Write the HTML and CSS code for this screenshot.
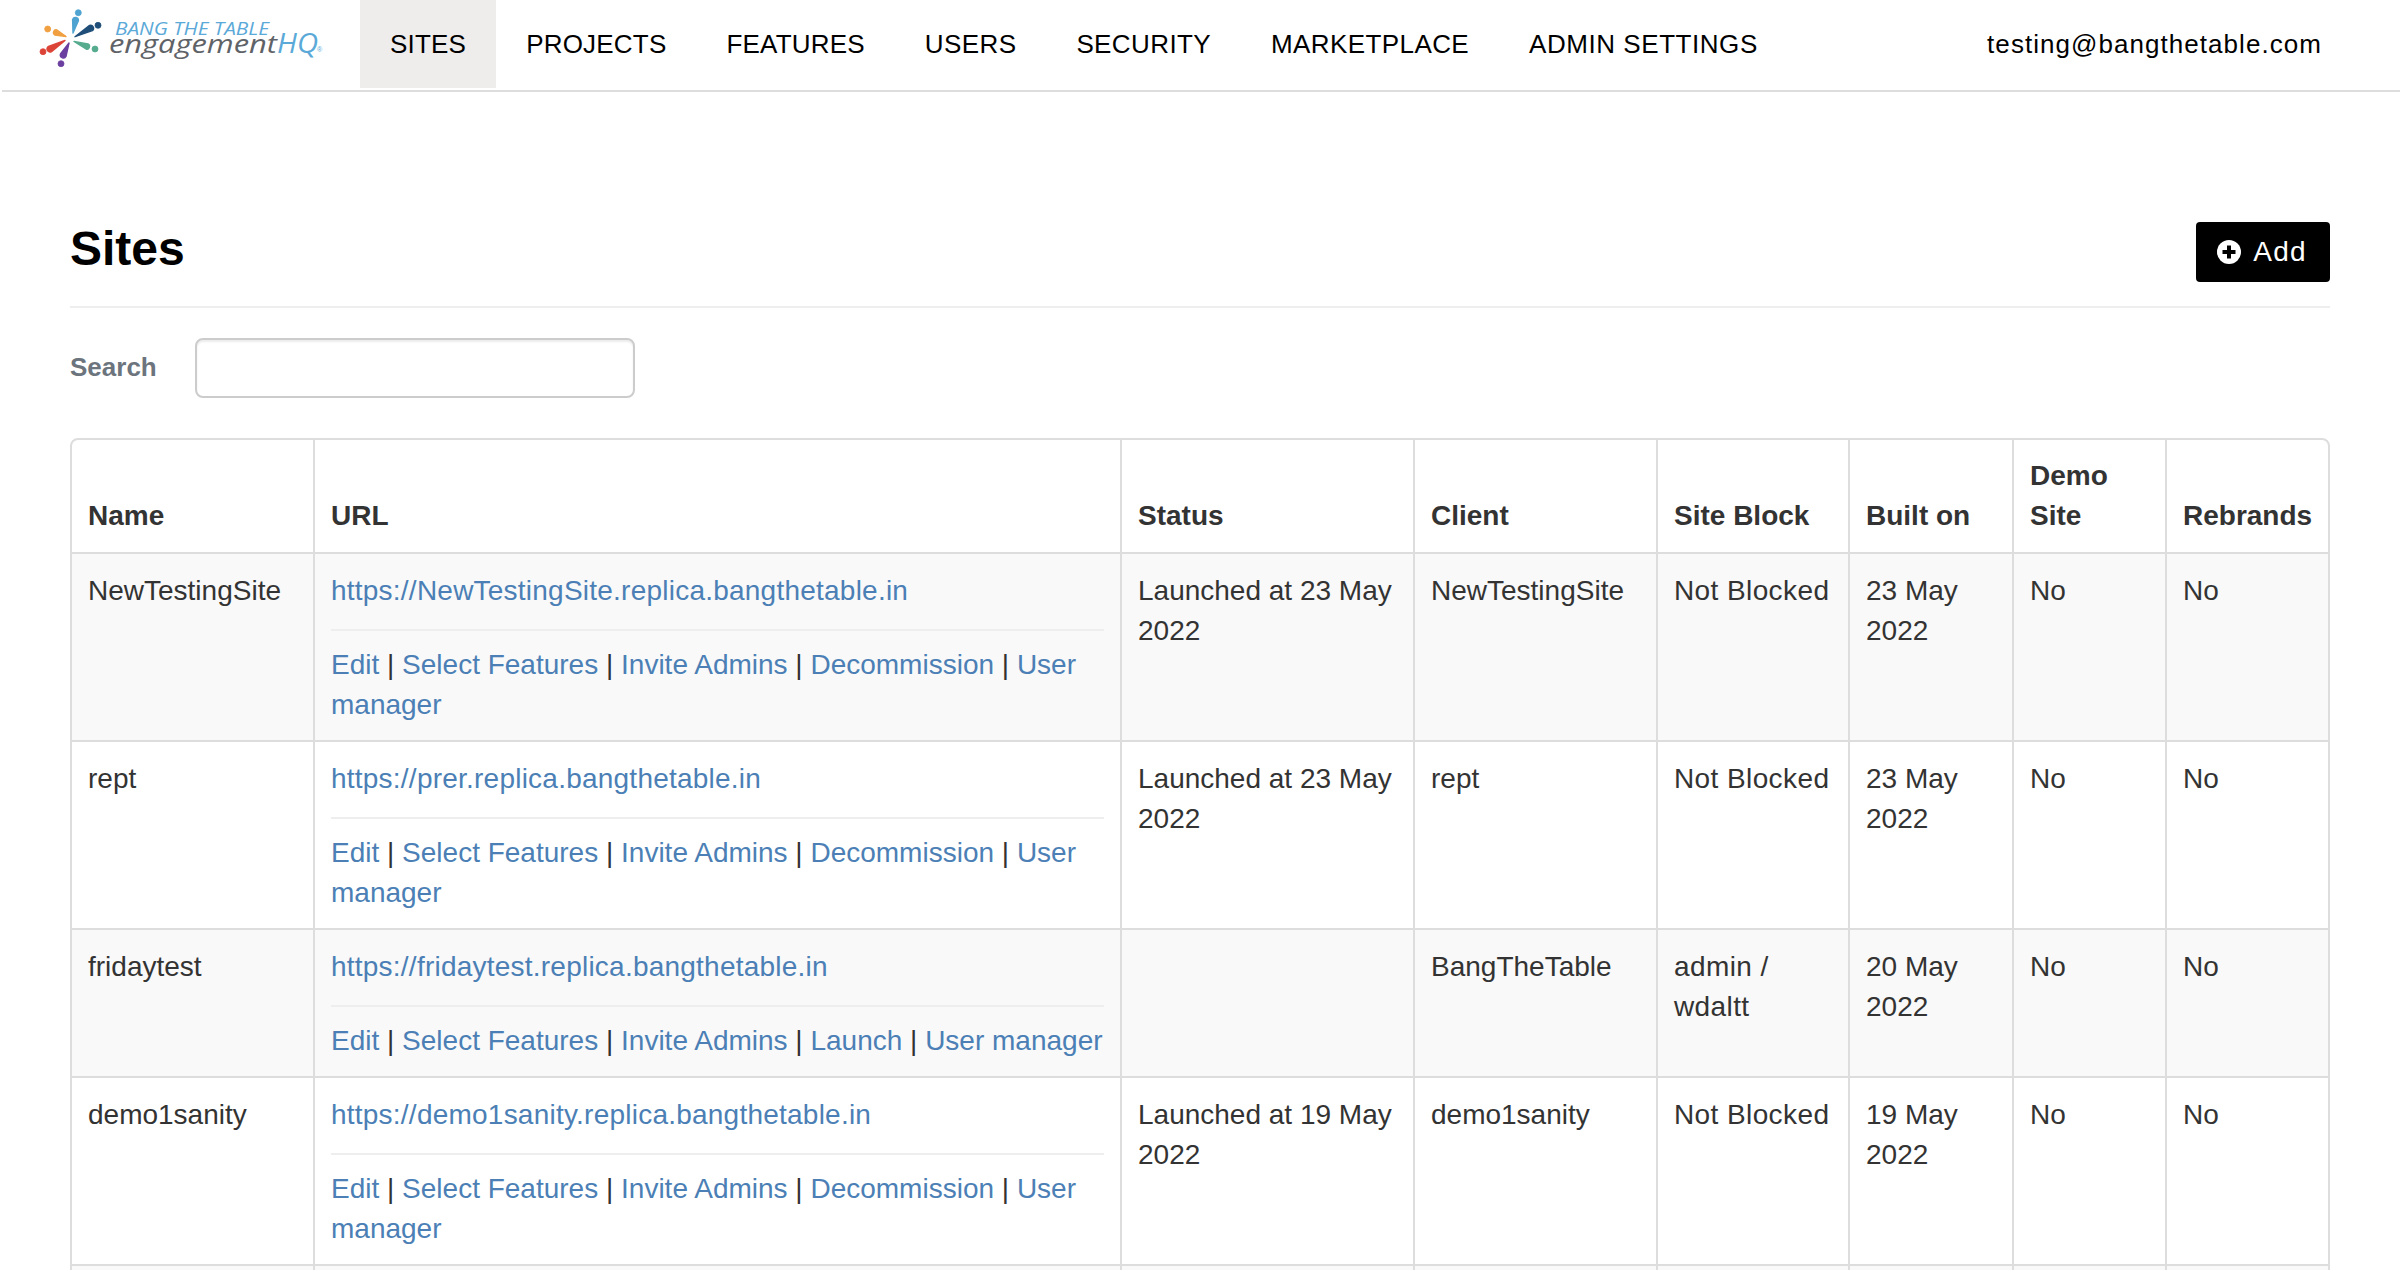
FILE: index.html
```html
<!DOCTYPE html>
<html lang="en">
<head>
<meta charset="utf-8">
<title>Sites</title>
<link rel="stylesheet" href="styles.css">
</head>
<body>
<header class="topbar">
  <a class="logo" href="#" aria-label="Bang the Table engagementHQ">
    <svg class="logo-art" viewBox="0 0 330 88" width="330" height="88">
      <g class="petal petal-blue">
        <circle cx="78.3" cy="12.7" r="3"/>
        <path d="M72.6 19.4A3 3 0 0 1 78.4 20.6L73 33Z"/>
      </g>
      <g class="petal petal-navy">
        <circle cx="98" cy="25.3" r="3"/>
        <path d="M89.6 25.4A3 3 0 0 1 92.4 30.6L75 36.7Z"/>
      </g>
      <g class="petal petal-green">
        <circle cx="95" cy="49" r="3"/>
        <path d="M88 44A2.7 2.7 0 0 1 86 49L74 41.5Z"/>
      </g>
      <g class="petal petal-purple">
        <circle cx="61" cy="63.7" r="3"/>
        <path d="M66 56.3A3 3 0 0 1 60.6 53.7L69 43Z"/>
      </g>
      <g class="petal petal-red">
        <circle cx="43" cy="51.7" r="3"/>
        <path d="M51.5 51.6A3 3 0 0 1 48.5 46.4L65 40.5Z"/>
      </g>
      <g class="petal petal-orange">
        <circle cx="47.7" cy="29" r="3"/>
        <path d="M55 35A2.7 2.7 0 0 1 57 30L66 36.5Z"/>
      </g>
      <text class="logo-top" x="115" y="35" textLength="154" lengthAdjust="spacingAndGlyphs">BANG THE TABLE</text>
      <text class="logo-main" x="109" y="52.5" textLength="168" lengthAdjust="spacingAndGlyphs">engagement</text>
      <text class="logo-hq" x="277" y="52.5" textLength="41" lengthAdjust="spacingAndGlyphs">HQ</text>
      <text class="logo-reg" x="317" y="52">®</text>
    </svg>
  </a>
  <nav class="main-nav">
    <a class="nav-item active" href="#">SITES</a>
    <a class="nav-item" href="#">PROJECTS</a>
    <a class="nav-item" href="#">FEATURES</a>
    <a class="nav-item" href="#">USERS</a>
    <a class="nav-item" href="#">SECURITY</a>
    <a class="nav-item" href="#">MARKETPLACE</a>
    <a class="nav-item" href="#">ADMIN SETTINGS</a>
  </nav>
  <a class="user-email" href="#">testing@bangthetable.com</a>
</header>

<main class="content">
  <div class="title-row">
    <h1 class="page-title">Sites</h1>
    <a class="add-btn" href="#">
      <svg class="add-icon" viewBox="0 0 24 24" width="24" height="24" aria-hidden="true">
        <circle cx="12" cy="12" r="12" fill="#fff"/>
        <path d="M12 5.5v13M5.5 12h13" stroke="#000" stroke-width="4" fill="none"/>
      </svg>
      <span>Add</span>
    </a>
  </div>

  <form class="search-row">
    <label class="search-label" for="search">Search</label>
    <input class="search-input" id="search" type="text">
  </form>

  <table class="sites-table">
    <colgroup>
      <col class="col-name"><col class="col-url"><col class="col-status"><col class="col-client">
      <col class="col-block"><col class="col-built"><col class="col-demo"><col class="col-rebrands">
    </colgroup>
    <thead>
      <tr>
        <th>Name</th><th>URL</th><th>Status</th><th>Client</th>
        <th>Site Block</th><th>Built on</th><th>Demo Site</th><th>Rebrands</th>
      </tr>
    </thead>
    <tbody>
      <tr>
        <td>NewTestingSite</td>
        <td>
          <a class="site-url" href="#">https://NewTestingSite.replica.bangthetable.in</a>
          <hr class="cell-rule">
          <a href="#">Edit</a> | <a href="#">Select Features</a> | <a href="#">Invite Admins</a> | <a href="#">Decommission</a> | <a href="#">User manager</a>
        </td>
        <td>Launched at 23 May 2022</td>
        <td>NewTestingSite</td>
        <td class="cell-block">Not Blocked</td>
        <td>23 May 2022</td>
        <td>No</td>
        <td>No</td>
      </tr>
      <tr>
        <td>rept</td>
        <td>
          <a class="site-url" href="#">https://prer.replica.bangthetable.in</a>
          <hr class="cell-rule">
          <a href="#">Edit</a> | <a href="#">Select Features</a> | <a href="#">Invite Admins</a> | <a href="#">Decommission</a> | <a href="#">User manager</a>
        </td>
        <td>Launched at 23 May 2022</td>
        <td>rept</td>
        <td class="cell-block">Not Blocked</td>
        <td>23 May 2022</td>
        <td>No</td>
        <td>No</td>
      </tr>
      <tr>
        <td>fridaytest</td>
        <td>
          <a class="site-url" href="#">https://fridaytest.replica.bangthetable.in</a>
          <hr class="cell-rule">
          <a href="#">Edit</a> | <a href="#">Select Features</a> | <a href="#">Invite Admins</a> | <a href="#">Launch</a> | <a href="#">User manager</a>
        </td>
        <td></td>
        <td>BangTheTable</td>
        <td class="cell-block">admin / wdaltt</td>
        <td>20 May 2022</td>
        <td>No</td>
        <td>No</td>
      </tr>
      <tr>
        <td>demo1sanity</td>
        <td>
          <a class="site-url" href="#">https://demo1sanity.replica.bangthetable.in</a>
          <hr class="cell-rule">
          <a href="#">Edit</a> | <a href="#">Select Features</a> | <a href="#">Invite Admins</a> | <a href="#">Decommission</a> | <a href="#">User manager</a>
        </td>
        <td>Launched at 19 May 2022</td>
        <td>demo1sanity</td>
        <td class="cell-block">Not Blocked</td>
        <td>19 May 2022</td>
        <td>No</td>
        <td>No</td>
      </tr>
      <tr class="row-next">
        <td></td><td></td><td></td><td></td><td></td><td></td><td></td><td></td>
      </tr>
    </tbody>
  </table>
</main>
</body>
</html>
```

FILE: styles.css
```css
* {
  box-sizing: border-box;
}

html {
  overflow: hidden;
}

body {
  margin: 0;
  background: #fff;
  color: #333;
  font-family: "Liberation Sans", Arial, sans-serif;
  font-size: 28px;
  line-height: 40px;
}

a {
  color: #4b7fb5;
  text-decoration: none;
}

/* Top bar */
.topbar {
  display: flex;
  align-items: flex-start;
  height: 92px;
  margin-left: 2px;
  border-bottom: 2px solid #ddd;
}

.logo {
  display: block;
  flex: none;
  width: 358px;
  height: 88px;
}

.logo-art {
  display: block;
  margin-left: -2px;
}

.petal {
  stroke-width: 1.4;
  stroke-linejoin: round;
}

.petal circle {
  stroke-width: 0.8;
}

.petal-blue { fill: #4fa3d1; stroke: #4fa3d1; }
.petal-navy { fill: #1f4e79; stroke: #1f4e79; }
.petal-green { fill: #55ab8e; stroke: #55ab8e; }
.petal-purple { fill: #6b3fa0; stroke: #6b3fa0; }
.petal-red { fill: #dc4437; stroke: #dc4437; }
.petal-orange { fill: #f0a040; stroke: #f0a040; }

.logo-top {
  fill: #5aa9d8;
  font-family: "Open Sans", "Liberation Sans", sans-serif;
  font-size: 18.6px;
  font-style: italic;
}

.logo-main {
  fill: #5f6368;
  font-family: "Open Sans", "Liberation Sans", sans-serif;
  font-size: 26px;
  font-style: italic;
}

.logo-hq {
  fill: #5aa9d8;
  font-family: "Open Sans", "Liberation Sans", sans-serif;
  font-size: 27px;
  font-style: italic;
}

.logo-reg {
  fill: #5aa9d8;
  font-family: "Liberation Sans", Arial, sans-serif;
  font-size: 7px;
}

.main-nav {
  display: flex;
}

.nav-item {
  display: block;
  height: 88px;
  padding: 0 30px;
  color: #000;
  font-size: 26px;
  line-height: 88px;
  letter-spacing: 0.4px;
}

.nav-item:nth-child(-n+3) {
  letter-spacing: 0.2px;
}

.nav-item:last-child {
  letter-spacing: 0.55px;
}

.nav-item.active {
  background: #efecec;
}

.user-email {
  margin-left: auto;
  margin-right: 78px;
  color: #000;
  font-size: 26px;
  line-height: 88px;
  letter-spacing: 1.05px;
}

/* Main content */
.content {
  padding: 130px 70px 0;
}

.title-row {
  display: flex;
  align-items: center;
  justify-content: space-between;
  padding-bottom: 24px;
  border-bottom: 2px solid #eee;
}

.page-title {
  margin: 0 0 6px;
  color: #000;
  font-size: 48px;
  font-weight: 700;
  line-height: 54px;
}

.add-btn {
  display: flex;
  align-items: center;
  gap: 12px;
  height: 60px;
  padding: 0 23px 0 21px;
  border-radius: 4px;
  background: #000;
  color: #fff;
  letter-spacing: 1.3px;
}

.add-icon {
  display: block;
  flex: none;
}

.search-row {
  display: flex;
  align-items: center;
  gap: 38px;
  margin: 30px 0 40px;
}

.search-label {
  margin-bottom: 3px;
  color: #6c757d;
  font-size: 26px;
  font-weight: 700;
  line-height: 56px;
}

.search-input {
  width: 440px;
  height: 60px;
  border: 2px solid #ccc;
  border-radius: 8px;
  background: #fff;
  box-shadow: inset 0 2px 2px rgba(0, 0, 0, 0.075);
}

/* Table */
.sites-table {
  width: 2260px;
  table-layout: fixed;
  border-collapse: separate;
  border-spacing: 0;
  border: 2px solid #ddd;
  border-radius: 8px;
}

.col-name { width: 241px; }
.col-url { width: 807px; }
.col-status { width: 293px; }
.col-client { width: 243px; }
.col-block { width: 192px; }
.col-built { width: 164px; }
.col-demo { width: 153px; }
.col-rebrands { width: 163px; }

.sites-table th,
.sites-table td {
  border-left: 2px solid #ddd;
  text-align: left;
}

.sites-table th {
  padding: 16px;
  font-weight: 700;
  vertical-align: bottom;
}

.sites-table td {
  padding: 17px 16px 15px;
  border-top: 2px solid #ddd;
  vertical-align: top;
}

.sites-table th:first-child,
.sites-table td:first-child {
  border-left: 0;
}

.sites-table tbody tr:nth-child(odd) td {
  background: #f9f9f9;
}

.site-url {
  letter-spacing: 0.23px;
}

.sites-table .cell-block {
  letter-spacing: 0.4px;
}

.cell-rule {
  height: 2px;
  margin: 18px 0 14px;
  border: 0;
  background: #eee;
}

.row-next td {
  height: 72px;
}
```
